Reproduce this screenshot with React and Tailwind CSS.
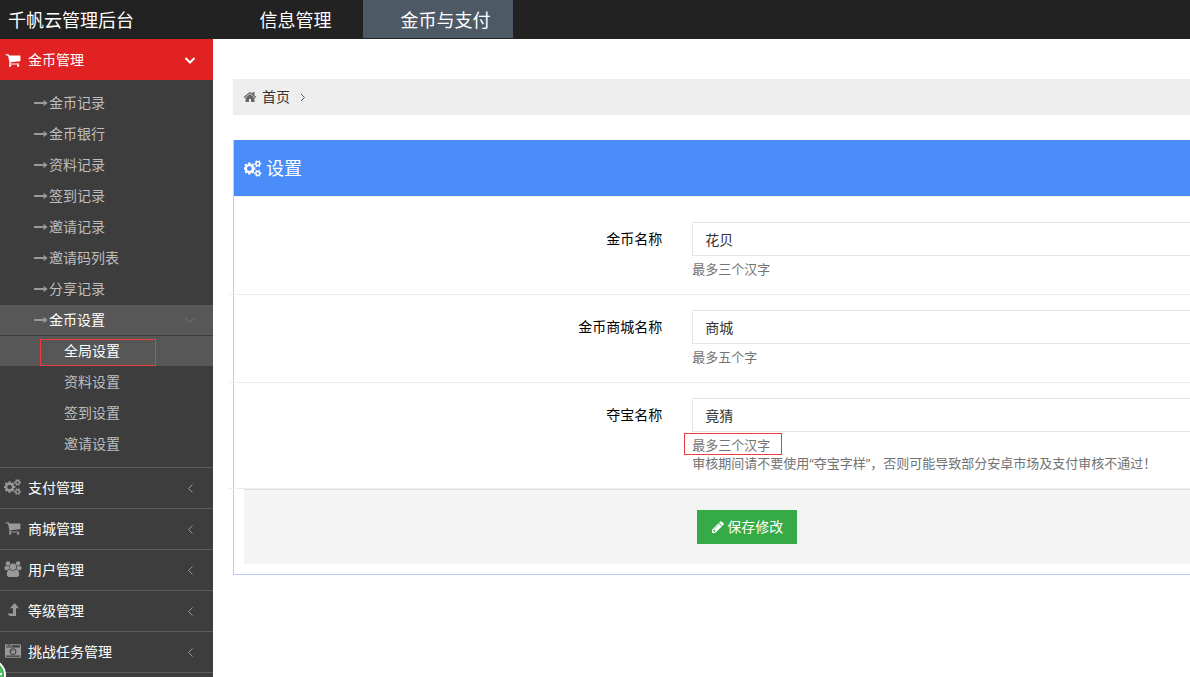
import React, { useState } from 'react';

const ICONS = {
  cart: {
    box: '0 0 1792 1792',
    d: 'M704 1536q0 52-38 90t-90 38-90-38-38-90 38-90 90-38 90 38 38 90zm896 0q0 52-38 90t-90 38-90-38-38-90 38-90 90-38 90 38 38 90zm128-1088v512q0 24-16.5 42.5t-40.5 21.5l-1044 122q13 60 13 70 0 16-24 64h920q26 0 45 19t19 45-19 45-45 19h-1024q-26 0-45-19t-19-45q0-11 8-31.5t16-36 21.5-40 15.5-29.5l-177-823h-204q-26 0-45-19t-19-45 19-45 45-19h256q16 0 28.5 6.5t19.5 15.5 13 24.5 8 26 5.5 29.5 4.5 26h1201q26 0 45 19t19 45z'
  },
  cogs: {
    box: '0 0 1920 1792',
    d: 'M832 896q0-106-75-181t-181-75-181 75-75 181 75 181 181 75 181-75 75-181zm768 512q0-52-38-90t-90-38-90 38-38 90q0 53 37.5 90.5t90.5 37.5 90.5-37.5 37.5-90.5zm0-1024q0-52-38-90t-90-38-90 38-38 90q0 53 37.5 90.5t90.5 37.5 90.5-37.5 37.5-90.5zm-384 421v185q0 10-7 19.5t-16 10.5l-155 24q-11 35-32 76 34 48 90 115 7 11 7 20 0 12-7 19-23 30-82.5 89.5t-78.5 59.5q-11 0-21-7l-115-90q-37 19-77 31-11 108-23 155-7 24-30 24h-186q-11 0-20-7.5t-10-17.5l-23-153q-34-10-75-31l-118 89q-7 7-20 7-11 0-21-8-144-133-144-160 0-9 7-19 10-14 41-53t47-61q-23-44-35-82l-152-24q-10-1-17-9.5t-7-19.5v-185q0-10 7-19.5t16-10.5l155-24q11-35 32-76-34-48-90-115-7-11-7-20 0-12 7-20 22-30 82-89t79-59q11 0 21 7l115 90q34-18 77-32 11-108 23-154 7-24 30-24h186q11 0 20 7.5t10 17.5l23 153q34 10 75 31l118-89q8-7 20-7 11 0 21 8 144 133 144 160 0 8-7 19-12 16-42 54t-45 60q23 48 34 82l152 23q10 2 17 10.5t7 19.5zm640 533v140q0 16-149 31-12 27-30 52 51 113 51 138 0 4-4 7-122 71-124 71-8 0-46-47t-52-68q-20 2-30 2t-30-2q-14 21-52 68t-46 47q-2 0-124-71-4-3-4-7 0-25 51-138-18-25-30-52-149-15-149-31v-140q0-16 149-31 13-29 30-52-51-113-51-138 0-4 4-7 4-2 35-20t59-34 30-16q8 0 46 46.5t52 67.5q20-2 30-2t30 2q51-71 92-112l6-2q4 0 124 70 4 3 4 7 0 25-51 138 17 23 30 52 149 15 149 31zm0-1024v140q0 16-149 31-12 27-30 52 51 113 51 138 0 4-4 7-122 71-124 71-8 0-46-47t-52-68q-20 2-30 2t-30-2q-14 21-52 68t-46 47q-2 0-124-71-4-3-4-7 0-25 51-138-18-25-30-52-149-15-149-31v-140q0-16 149-31 13-29 30-52-51-113-51-138 0-4 4-7 4-2 35-20t59-34 30-16q8 0 46 46.5t52 67.5q20-2 30-2t30 2q51-71 92-112l6-2q4 0 124 70 4 3 4 7 0 25-51 138 17 23 30 52 149 15 149 31z'
  },
  group: {
    box: '0 0 2048 1792',
    d: 'M657 896q-162 5-265 128h-134q-82 0-138-40.5t-56-118.5q0-353 124-353 6 0 43.5 21t97.5 42.5 119 21.5q67 0 133-23-5 37-5 66 0 159 93 256zm1071 637q0 120-73 189.5t-194 69.5h-874q-121 0-194-69.5t-73-189.5q0-53 3.5-103.5t14-109 26.5-108.5 43-97.5 62-81 85.5-53.5 111.5-20q10 0 43 21.5t73 48 107 48 135 21.5 135-21.5 107-48 73-48 43-21.5q61 0 111.5 20t85.5 53.5 62 81 43 97.5 26.5 108.5 14 109 3.5 103.5zm-1024-1277q0 106-75 181t-181 75-181-75-75-181 75-181 181-75 181 75 75 181zm704 384q0 159-112.5 271.5t-271.5 112.5-271.5-112.5-112.5-271.5 112.5-271.5 271.5-112.5 271.5 112.5 112.5 271.5zm576 225q0 78-56 118.5t-138 40.5h-134q-103-123-265-128 93-97 93-256 0-29-5-66 66 23 133 23 59 0 119-21.5t97.5-42.5 43.5-21q124 0 124 353zm-128-609q0 106-75 181t-181 75-181-75-75-181 75-181 181-75 181 75 75 181z'
  },
  levelUp: {
    box: '0 0 18 16',
    d: 'M10.5 1L15 6.2H12V14H5.6L3.6 11.6H9V6.2H6Z'
  },
  camera: {
    box: '0 0 1792 1792',
    d: 'M928 832q0-14-9-23t-23-9q-66 0-113 47t-47 113q0 14 9 23t23 9 23-9 9-23q0-40 28-68t68-28q14 0 23-9t9-23zm224 130q0 106-75 181t-181 75-181-75-75-181 75-181 181-75 181 75 75 181zm-1024 574h1536v-128h-1536v128zm1152-574q0-159-112.5-271.5t-271.5-112.5-271.5 112.5-112.5 271.5 112.5 271.5 271.5 112.5 271.5-112.5 112.5-271.5zm-1024-642h384v-128h-384v128zm-128 192h1536v-256h-828l-64 128h-644v128zm1664-256v1280q0 53-37.5 90.5t-90.5 37.5h-1536q-53 0-90.5-37.5t-37.5-90.5v-1280q0-53 37.5-90.5t90.5-37.5h1536q53 0 90.5 37.5t37.5 90.5z'
  },
  home: {
    box: '0 0 1792 1792',
    d: 'M1472 992v480q0 26-19 45t-45 19h-384v-384h-256v384h-384q-26 0-45-19t-19-45v-480q0-1 .5-3t.5-3l575-474 575 474q1 2 1 6zm223-69l-62 74q-8 9-21 11h-3q-13 0-21-7l-692-577-692 577q-12 8-24 7-13-2-21-11l-62-74q-8-10-7-23.5t11-21.5l719-599q32-26 76-26t76 26l244 204v-195q0-14 9-23t23-9h192q14 0 23 9t9 23v408l219 182q10 8 11 21.5t-7 23.5z'
  },
  pencil: {
    box: '0 0 1792 1792',
    d: 'M491 1536l91-91-235-235-91 91v107h128v128h107zm523-928q0-22-22-22-10 0-17 7l-542 542q-7 7-7 17 0 22 22 22 10 0 17-7l542-542q7-7 7-17zm-54-192l416 416-832 832h-416v-416zm683 96q0 53-37 90l-166 166-416-416 166-165q36-38 90-38 53 0 91 38l235 234q37 39 37 91z'
  },
  arrow: {
    box: '0 0 14 14',
    d: 'M0 6H9.6V3.8L13.6 7L9.6 10.2V8H0Z'
  }
};

function Icon({ name, className }) {
  const icon = ICONS[name];
  return (
    <svg viewBox={icon.box} fill="currentColor" fillRule="evenodd" aria-hidden="true" className={className}>
      <path d={icon.d} />
    </svg>
  );
}

function Chevron({ direction, className }) {
  const paths = {
    down: 'M1.5 4L6 8.5L10.5 4',
    left: 'M8.5 2.5L4.5 6.5L8.5 10.5',
    right: 'M4 3L7.5 6.5L4 10'
  };
  return (
    <svg viewBox="0 0 12 12" fill="none" stroke="currentColor" aria-hidden="true" className={className}>
      <path d={paths[direction]} />
    </svg>
  );
}

const coinLinks = ['金币记录', '金币银行', '资料记录', '签到记录', '邀请记录', '邀请码列表', '分享记录'];

const settingLinks = ['全局设置', '资料设置', '签到设置', '邀请设置'];

const menuItems = [
  { label: '支付管理', icon: 'cogs' },
  { label: '商城管理', icon: 'cart' },
  { label: '用户管理', icon: 'group' },
  { label: '等级管理', icon: 'levelUp' },
  { label: '挑战任务管理', icon: 'camera' }
];

const formFields = [
  { id: 'coinName', label: '金币名称', help: ['最多三个汉字'] },
  { id: 'mallName', label: '金币商城名称', help: ['最多五个字'] },
  {
    id: 'treasureName',
    label: '夺宝名称',
    help: ['最多三个汉字', '审核期间请不要使用“夺宝字样”，否则可能导致部分安卓市场及支付审核不通过！'],
    marked: true
  }
];

function Header() {
  return (
    <header className="flex h-[39px] bg-[#222222] text-lg text-white">
      <a href="#" className="w-[213px] shrink-0 pl-2 leading-[40px]">千帆云管理后台</a>
      <nav className="flex">
        <a href="#" className="h-[38px] w-[150px] pl-[15px] text-center leading-[40px]">信息管理</a>
        <a href="#" className="h-[38px] w-[150px] bg-[#4d5965] pl-[15px] text-center leading-[40px]">金币与支付</a>
      </nav>
    </header>
  );
}

function Sidebar() {
  return (
    <aside className="w-[213px] shrink-0 bg-[#3d3d3d] text-sm">
      <a href="#" className="flex h-[41px] items-center bg-[#e02222] pr-[17px] pl-[5px] text-white">
        <Icon name="cart" className="h-4 w-4" />
        <span className="ml-[7px] flex-1">金币管理</span>
        <Chevron direction="down" className="h-3 w-3 stroke-2" />
      </a>

      <ul className="space-y-px py-2 text-[#bdbdbd]">
        {coinLinks.map(label => (
          <li key={label}>
            <a href="#" className="flex h-[30px] items-center pl-[34px]">
              <Icon name="arrow" className="mr-px h-[14px] w-[14px] text-[#999999]" />
              {label}
            </a>
          </li>
        ))}
        <li>
          <a href="#" className="flex h-[30px] items-center bg-[#575757] pr-[17px] pl-[34px] text-white">
            <Icon name="arrow" className="mr-px h-[14px] w-[14px] text-[#999999]" />
            <span className="flex-1">金币设置</span>
            <Chevron direction="down" className="h-3 w-3 text-[#777777]" />
          </a>
          <ul className="mt-px space-y-px">
            {settingLinks.map((label, index) => (
              <li key={label} className={index === 0 ? 'relative bg-[#575757] text-white' : ''}>
                <a href="#" className="flex h-[30px] items-center pl-16">{label}</a>
                {index === 0 && (
                  <span className="absolute top-[3px] left-10 h-[27px] w-[116px] border border-[#ee3b3b]" />
                )}
              </li>
            ))}
          </ul>
        </li>
      </ul>

      <ul className="border-b border-[#5c5c5c]">
        {menuItems.map(item => (
          <li key={item.label} className="border-t border-[#5c5c5c]">
            <a href="#" className="flex h-10 items-center pr-[17px] pl-1 text-white">
              <Icon name={item.icon} className="mb-[2px] h-4 w-[18px] text-[#999999]" />
              <span className="ml-[6px] flex-1">{item.label}</span>
              <Chevron direction="left" className="h-3 w-3 text-[#999999]" />
            </a>
          </li>
        ))}
      </ul>
    </aside>
  );
}

function SettingsForm() {
  const [values, setValues] = useState({
    coinName: '花贝',
    mallName: '商城',
    treasureName: '竟猜'
  });

  const handleChange = (field, value) => {
    setValues({ ...values, [field]: value });
  };

  return (
    <section className="mt-[25px] border-b border-l border-[#b4cef8]">
      <h1 className="flex h-14 items-center bg-[#4b8df8] pl-[10px] text-lg text-white">
        <Icon name="cogs" className="mr-1 h-[17px] w-[18px]" />
        设置
      </h1>

      <form className="border-t border-[#eeeeee] pt-[10px] pb-[10px]" onSubmit={(e) => e.preventDefault()}>
        {formFields.map(field => (
          <div key={field.id} className="-ml-[5px] flex border-b border-[#eeeeee] py-[15px]">
            <label
              htmlFor={field.id}
              className="w-[48.2%] shrink-0 pr-[30px] text-right text-sm leading-[34px] text-black"
            >
              {field.label}
            </label>
            <div className="min-w-0 flex-1">
              <input
                id={field.id}
                type="text"
                value={values[field.id]}
                onChange={(e) => handleChange(field.id, e.target.value)}
                className="block h-[34px] w-full border border-r-0 border-[#e5e5e5] px-3 text-sm text-[#333333]"
              />
              <div className="relative mt-1 mb-px text-[13px] leading-[18px] text-[#737373]">
                {field.help.map(line => (
                  <p key={line}>{line}</p>
                ))}
                {field.marked && (
                  <span className="absolute -top-[3px] -left-2 h-[22px] w-[98px] border border-[#ee3b3b]" />
                )}
              </div>
            </div>
          </div>
        ))}

        <div className="ml-[10px] border-t border-[#e0e0e0] bg-[#f4f4f4] py-5 pl-[47.4%]">
          <button
            type="submit"
            className="flex h-[34px] w-[100px] items-center justify-center bg-[#35aa47] text-sm text-white"
          >
            <Icon name="pencil" className="mr-[2px] h-[14px] w-[14px]" />
            保存修改
          </button>
        </div>
      </form>
    </section>
  );
}

export default function App() {
  return (
    <div
      lang="zh-CN"
      className="relative flex h-screen flex-col overflow-hidden bg-white font-['Open_Sans','Noto_Sans_CJK_SC',sans-serif]"
    >
      <Header />
      <div className="flex flex-1">
        <Sidebar />
        <main className="min-w-0 flex-1 pt-10 pl-5">
          <nav className="flex h-9 items-center bg-[#eeeeee] pl-[10px] text-sm text-[#333333]">
            <Icon name="home" className="mr-[5px] h-[14px] w-[14px] text-[#666666]" />
            <a href="#">首页</a>
            <Chevron direction="right" className="ml-[7px] h-3 w-3 text-[#555555]" />
          </nav>
          <SettingsForm />
        </main>
      </div>

      {/* Floating helper badge, half hidden at the window edge */}
      <svg viewBox="0 0 7 17" aria-hidden="true" className="absolute bottom-0 left-0 h-[17px] w-[7px]">
        <circle cx="-10" cy="15" r="16" fill="#ffffff" />
        <circle cx="-10" cy="15" r="14" fill="#2f9e44" />
        <circle cx="-10" cy="15" r="13" fill="#4cc764" />
        <path d="M0 13H2V15H0Z" fill="#ffffff" />
      </svg>
    </div>
  );
}
